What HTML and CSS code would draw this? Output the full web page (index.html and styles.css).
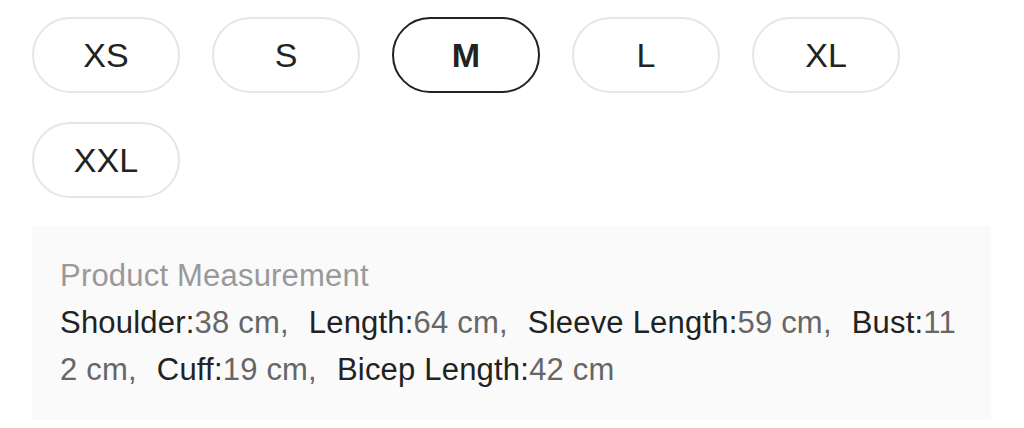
FILE: index.html
```html
<!DOCTYPE html>
<html>
<head>
<meta charset="utf-8">
<link rel="stylesheet" href="styles.css">
</head>
<body>
<div class="page">
  <div class="sizes">
    <div class="pill">XS</div>
    <div class="pill">S</div>
    <div class="pill selected">M</div>
    <div class="pill">L</div>
    <div class="pill">XL</div>
    <div class="pill">XXL</div>
  </div>
  <div class="measure">
    <div class="title">Product Measurement</div>
    <div class="items"><span class="item"><span class="label">Shoulder:</span><span class="val">38 cm,</span></span><span class="item"><span class="label">Length:</span><span class="val">64 cm,</span></span><span class="item"><span class="label">Sleeve Length:</span><span class="val">59 cm,</span></span><span class="item"><span class="label">Bust:</span><span class="val">112 cm,</span></span><span class="item"><span class="label">Cuff:</span><span class="val">19 cm,</span></span><span class="item"><span class="label">Bicep Length:</span><span class="val">42 cm</span></span></div>
  </div>
</div>
</body>
</html>
```
FILE: styles.css
```css
html, body {
  margin: 0;
  padding: 0;
  background: #fff;
}
.page {
  padding: 17px 33px 0 32px;
  font-family: "Liberation Sans", Arial, sans-serif;
}
.sizes {
  display: flex;
  flex-wrap: wrap;
  gap: 29px 32px;
}
.pill {
  box-sizing: border-box;
  width: 148px;
  height: 76px;
  border: 2px solid #e6e6e6;
  border-radius: 38px;
  display: flex;
  align-items: center;
  justify-content: center;
  font-size: 34px;
  color: #222;
}
.pill.selected {
  border-color: #222;
  font-weight: bold;
}
.measure {
  margin-top: 28px;
  background: #fafafa;
  padding: 26px 28px 27px 28px;
  font-size: 31px;
  line-height: 47px;
  letter-spacing: 0.2px;
}
.title {
  color: #999;
}
.items {
  word-break: break-all;
  color: #222;
}
.item {
  margin-right: 20px;
}
.item:last-child {
  margin-right: 0;
}
.val {
  color: #666;
}
```
